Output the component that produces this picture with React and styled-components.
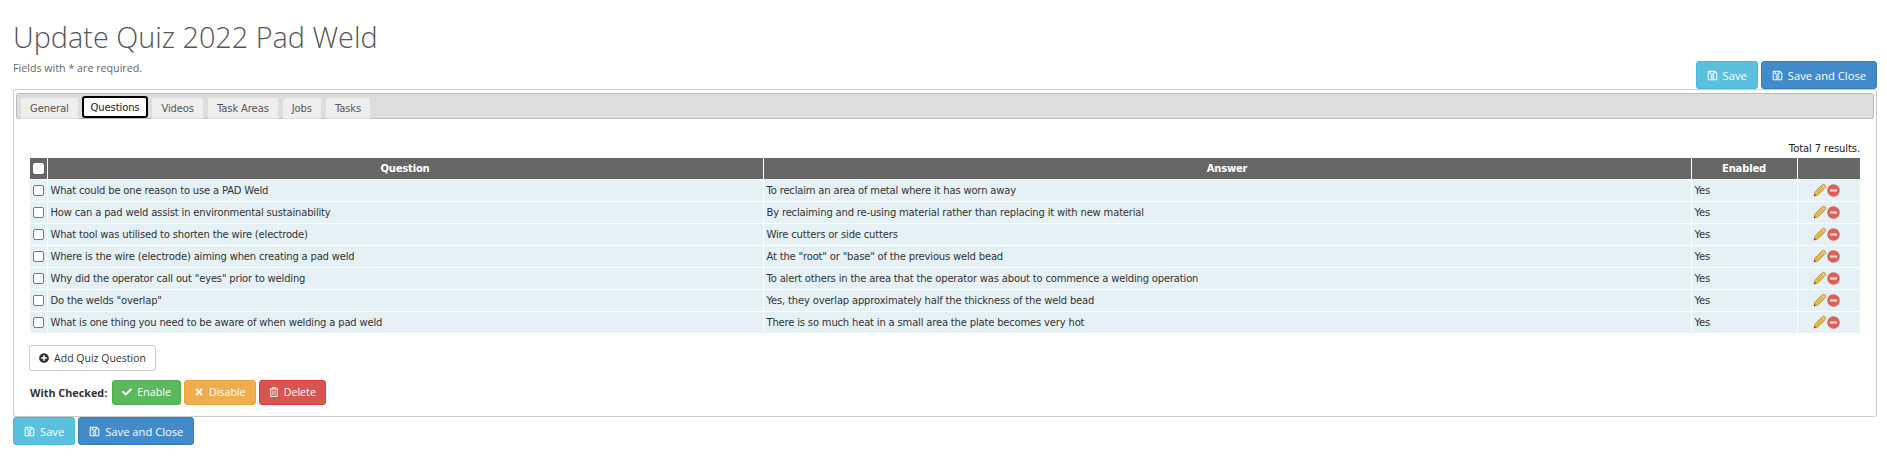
import React from "react";
import styled, { createGlobalStyle } from "styled-components";
import { FaRegSave, FaCheck, FaTimes, FaRegTrashAlt, FaPlusCircle } from "react-icons/fa";

const Global = createGlobalStyle`
  html, body { margin: 0; padding: 0; background: #fff; }
  body { font-family: "Open Sans", sans-serif; color: #333; }
`;
const Page = styled.div`
  padding: 0 10px 0 13px;
  width: 1887px;
  box-sizing: border-box;
`;
const Header = styled.header`
  display: flex;
  justify-content: space-between;
  align-items: flex-end;
  height: 89px;
`;
const TitleBlock = styled.div`
  display: flex;
  flex-direction: column;
  padding-bottom: 13px;
`;
const Title = styled.h1`
  margin: 0;
  font: 300 28.8px/36px "Open Sans", sans-serif;
  color: #555;
`;
const Note = styled.p`
  margin: 6px 0 0;
  font: 400 10.7px/15px "Open Sans", sans-serif;
  color: #666;
`;
const ButtonRow = styled.div`
  display: flex;
  gap: 3px;
  align-items: center;
`;
const colors = {
  info: ["#5bc0de", "#46b8da"],
  primary: ["#428bca", "#357ebd"],
  success: ["#5cb85c", "#4cae4c"],
  warning: ["#f0ad4e", "#eea236"],
  danger: ["#d9534f", "#d43f3a"],
};
const Btn = styled.button`
  display: inline-flex;
  align-items: center;
  justify-content: center;
  gap: 5px;
  box-sizing: border-box;
  height: ${p => (p.$small ? 25 : 28)}px;
  padding: 0 ${p => (p.$small ? 9 : 10)}px;
  font: 400 ${p => (p.$small ? 10.7 : 11.2)}px "Open Sans", sans-serif;
  color: #fff;
  background: ${p => colors[p.$kind][0]};
  border: 1px solid ${p => colors[p.$kind][1]};
  border-radius: 3px;
  white-space: nowrap;
`;
const Panel = styled.section`
  box-sizing: border-box;
  width: 1864px;
  height: 328px;
  border: 1px solid #ccc;
  border-radius: 3px;
  padding: 3px 2px 0;
`;
const TabBar = styled.div`
  display: flex;
  gap: 3px;
  height: 26px;
  box-sizing: border-box;
  padding: 3px 0 0 3px;
  background: #ddd;
  border: 1px solid #bbb;
  border-radius: 3px;
`;
const Tab = styled.button`
  box-sizing: border-box;
  height: 22px;
  padding: 0 ${p => (p.$active ? 7 : 9)}px;
  font: 400 10px "DejaVu Sans", Verdana, sans-serif;
  letter-spacing: -0.12px;
  color: ${p => (p.$active ? "#222" : "#555")};
  background: ${p => (p.$active ? "#fff" : "#eee")};
  border: ${p => (p.$active ? "2px solid #000" : "1px solid #ddd")};
  border-radius: ${p => (p.$active ? "3px" : "3px 3px 0 0")};
  margin-top: ${p => (p.$active ? "-1px" : "0")};
  white-space: nowrap;
`;
const Content = styled.div`
  padding: 0 14px;
`;
const Total = styled.div`
  text-align: right;
  font: 400 10px/13px "DejaVu Sans", Verdana, sans-serif;
  letter-spacing: -0.1px;
  color: #222;
  padding: 23px 0 3px;
`;
const Table = styled.table`
  width: 1830px;
  table-layout: fixed;
  border-collapse: collapse;
  font: 400 10px "DejaVu Sans", Verdana, sans-serif;
  letter-spacing: -0.18px;
`;
const Th = styled.th`
  box-sizing: border-box;
  width: ${p => p.$w}px;
  height: 21px;
  padding: 0;
  background: #666;
  color: #fff;
  font-weight: 700;
  font-size: 10px;
  text-align: center;
  border-left: 1px solid #fff;
  &:first-child { border-left: 0; }
`;
const Row = styled.tr`
  background: #e5f1f4;
  border-top: 1px solid #fff;
`;
const Td = styled.td`
  height: 21px;
  padding: ${p => (p.$center ? "0 4px 0 0" : "0 3px")};
  color: #333;
  border-left: 1px solid #fff;
  text-align: ${p => (p.$center ? "center" : "left")};
  white-space: nowrap;
  &:first-child { border-left: 0; padding: 0; }
`;
const Check = styled.span`
  display: block;
  box-sizing: border-box;
  width: 11px;
  height: 11px;
  margin: 1px auto 0;
  border-radius: 2px;
  border: 1px solid ${p => (p.$head ? "#fff" : "#777")};
  background: #fff;
`;
const Actions = styled.span`
  display: inline-flex;
  align-items: center;
  vertical-align: middle;
`;
const AddBtn = styled.button`
  display: flex;
  align-items: center;
  justify-content: center;
  gap: 5px;
  box-sizing: border-box;
  height: 26px;
  width: 127px;
  margin: 12px 0 0 -1px;
  padding: 0;
  font: 400 10.5px "Open Sans", sans-serif;
  color: #333;
  background: #fff;
  border: 1px solid #ccc;
  border-radius: 3px;
  white-space: nowrap;
`;
const CheckedRow = styled.div`
  display: flex;
  align-items: center;
  gap: 3px;
  margin-top: 9px;
`;
const CheckedLabel = styled.span`
  font: 700 10.8px "Open Sans", sans-serif;
  color: #333;
  margin-right: 2px;
`;

const Pencil = () => (
  <svg width="14" height="14" viewBox="0 0 14 14">
    <path d="M1 13l.9-3.8 7.5-7.6c.6-.6 1.6-.6 2.2 0l.8.8c.6.6.6 1.6 0 2.2l-7.6 7.5z" fill="#e8b84a" stroke="#a98232" strokeWidth=".7" />
    <path d="M9.3 2.2l2.6 2.6" stroke="#d8d0b8" strokeWidth="1.5" />
    <path d="M1 13l.5-2.2 1.7 1.7z" fill="#5a4a2a" />
  </svg>
);
const Minus = () => (
  <svg width="13" height="13" viewBox="0 0 13 13">
    <circle cx="6.5" cy="6.5" r="6.2" fill="#dc5f58" />
    <rect x="3" y="5.4" width="7" height="2.2" fill="#f8dcd8" />
  </svg>
);

const rows = [
  ["What could be one reason to use a PAD Weld", "To reclaim an area of metal where it has worn away"],
  ["How can a pad weld assist in environmental sustainability", "By reclaiming and re-using material rather than replacing it with new material"],
  ["What tool was utilised to shorten the wire (electrode)", "Wire cutters or side cutters"],
  ["Where is the wire (electrode) aiming when creating a pad weld", 'At the "root" or "base" of the previous weld bead'],
  ['Why did the operator call out "eyes" prior to welding', "To alert others in the area that the operator was about to commence a welding operation"],
  ['Do the welds "overlap"', "Yes, they overlap approximately half the thickness of the weld bead"],
  ["What is one thing you need to be aware of when welding a pad weld", "There is so much heat in a small area the plate becomes very hot"],
];
const tabs = ["General", "Questions", "Videos", "Task Areas", "Jobs", "Tasks"];

const SaveButtons = () => (
  <ButtonRow>
    <Btn $kind="info"><FaRegSave size={11} />Save</Btn>
    <Btn $kind="primary"><FaRegSave size={11} />Save and Close</Btn>
  </ButtonRow>
);

export default function App() {
  return (
    <Page>
      <Global />
      <Header>
        <TitleBlock>
          <Title>Update Quiz 2022 Pad Weld</Title>
          <Note>Fields with * are required.</Note>
        </TitleBlock>
        <SaveButtons />
      </Header>
      <Panel>
        <TabBar>
          {tabs.map(t => <Tab key={t} $active={t === "Questions"}>{t}</Tab>)}
        </TabBar>
        <Content>
          <Total>Total 7 results.</Total>
          <Table>
            <thead>
              <tr>
                <Th $w={17}><Check $head /></Th>
                <Th $w={716}>Question</Th>
                <Th $w={928}>Answer</Th>
                <Th $w={106}>Enabled</Th>
                <Th $w={63} />
              </tr>
            </thead>
            <tbody>
              {rows.map(([q, a]) => (
                <Row key={q}>
                  <Td><Check /></Td>
                  <Td>{q}</Td>
                  <Td>{a}</Td>
                  <Td>Yes</Td>
                  <Td $center><Actions><Pencil /><Minus /></Actions></Td>
                </Row>
              ))}
            </tbody>
          </Table>
          <AddBtn><FaPlusCircle size={10} />Add Quiz Question</AddBtn>
          <CheckedRow>
            <CheckedLabel>With Checked:</CheckedLabel>
            <Btn $small $kind="success"><FaCheck size={10} />Enable</Btn>
            <Btn $small $kind="warning"><FaTimes size={10} />Disable</Btn>
            <Btn $small $kind="danger"><FaRegTrashAlt size={10} />Delete</Btn>
          </CheckedRow>
        </Content>
      </Panel>
      <SaveButtons />
    </Page>
  );
}
